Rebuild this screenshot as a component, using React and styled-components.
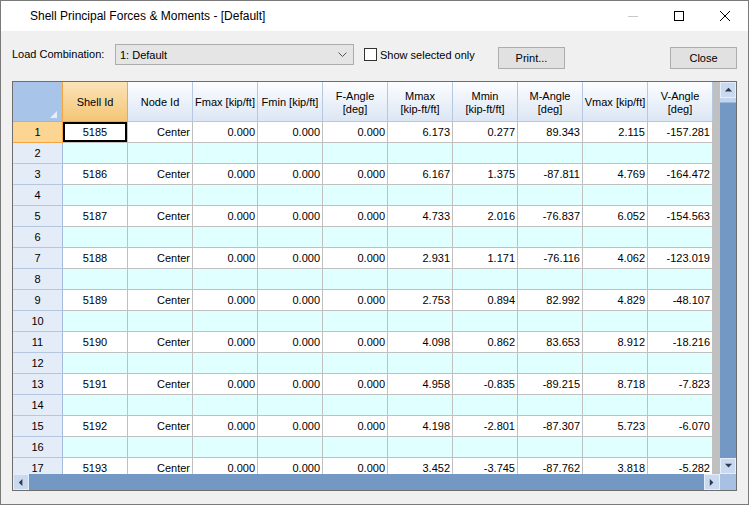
import styled, { createGlobalStyle } from "styled-components";

const GlobalStyle = createGlobalStyle`
  html, body {
    margin: 0;
    padding: 0;
    background: #ffffff;
  }
  * {
    box-sizing: border-box;
  }
`;

const UI_FONT = `"Liberation Sans", Arial, sans-serif`;

const COLUMNS = [
  ["Shell Id"],
  ["Node Id"],
  ["Fmax [kip/ft]"],
  ["Fmin [kip/ft]"],
  ["F-Angle", "[deg]"],
  ["Mmax", "[kip-ft/ft]"],
  ["Mmin", "[kip-ft/ft]"],
  ["M-Angle", "[deg]"],
  ["Vmax [kip/ft]"],
  ["V-Angle", "[deg]"],
];

const RESULTS = [
  ["5185", "6.173", "0.277", "89.343", "2.115", "-157.281"],
  ["5186", "6.167", "1.375", "-87.811", "4.769", "-164.472"],
  ["5187", "4.733", "2.016", "-76.837", "6.052", "-154.563"],
  ["5188", "2.931", "1.171", "-76.116", "4.062", "-123.019"],
  ["5189", "2.753", "0.894", "82.992", "4.829", "-48.107"],
  ["5190", "4.098", "0.862", "83.653", "8.912", "-18.216"],
  ["5191", "4.958", "-0.835", "-89.215", "8.718", "-7.823"],
  ["5192", "4.198", "-2.801", "-87.307", "5.723", "-6.070"],
  ["5193", "3.452", "-3.745", "-87.762", "3.818", "-5.282"],
];

// every result row is followed by an empty row in the grid
const ROWS = RESULTS.flatMap(([id, mmax, mmin, mang, vmax, vang]) => [
  [id, "Center", "0.000", "0.000", "0.000", mmax, mmin, mang, vmax, vang],
  null,
]);

const Window = styled.div`
  width: 749px;
  height: 505px;
  border: 1px solid #7a7a7a;
  background: #f0f0f0;
  display: flex;
  flex-direction: column;
  font-family: ${UI_FONT};
  font-size: 11px;
  color: #000;
  overflow: hidden;
`;

const TitleBar = styled.div`
  height: 30px;
  flex: none;
  background: #ffffff;
  display: flex;
  align-items: center;
  padding-left: 29px;
`;

const Title = styled.div`
  flex: 1;
  font-size: 12px;
  color: #000;
  margin-top: -1px;
`;

const WinButton = styled.div`
  width: 46px;
  height: 30px;
  display: flex;
  align-items: center;
  justify-content: center;
`;

const Content = styled.div`
  flex: 1;
  display: flex;
  flex-direction: column;
  padding: 13px 11px 0 11px;
`;

const Toolbar = styled.div`
  height: 25px;
  display: flex;
  align-items: flex-start;
  margin-bottom: 12px;
`;

const FieldLabel = styled.div`
  width: 103px;
  line-height: 21px;
`;

const Combo = styled.div`
  width: 239px;
  height: 21px;
  border: 1px solid #adadad;
  background: #e5e5e5;
  display: flex;
  align-items: center;
  padding: 0 6px 0 4px;
  justify-content: space-between;
`;

const CheckRow = styled.label`
  width: 134px;
  margin-left: 10px;
  display: flex;
  align-items: center;
  height: 21px;
  gap: 3px;
`;

const CheckBox = styled.span`
  width: 13px;
  height: 13px;
  border: 1px solid #333;
  background: #fff;
  flex: none;
`;

const PushButton = styled.div`
  width: 67px;
  height: 22px;
  margin-top: 3px;
  margin-left: ${({ $push }) => ($push ? "auto" : "0")};
  border: 1px solid #adadad;
  background: #e1e1e1;
  display: flex;
  align-items: center;
  justify-content: center;
`;

const GridFrame = styled.div`
  width: 725px;
  height: 410px;
  border: 1px solid #6d6d6d;
  display: flex;
  flex-direction: column;
  background: #c0c0c0;
`;

const GridMain = styled.div`
  flex: 1;
  display: flex;
  overflow: hidden;
`;

const Sheet = styled.div`
  width: 707px;
  overflow: hidden;
`;

const Line = styled.div`
  display: grid;
  grid-template-columns: 50px repeat(10, 65px);
  height: ${({ $head }) => ($head ? "40px" : "21px")};
`;

const Corner = styled.div`
  position: relative;
  background: #a9c4e9;
  border-right: 1px solid #f6a540;
  border-bottom: 1px solid #f6a540;
`;

const CornerMark = styled.span`
  position: absolute;
  right: 5px;
  bottom: 3px;
  width: 0;
  height: 0;
  border-left: 7px solid transparent;
  border-bottom: 7px solid #e8eef8;
`;

const HeadCell = styled.div`
  display: flex;
  flex-direction: column;
  align-items: center;
  justify-content: center;
  text-align: center;
  white-space: nowrap;
  line-height: 13px;
  padding-top: 2px;
  background: ${({ $active }) =>
    $active
      ? "linear-gradient(#fbe3b8, #f3c676)"
      : "linear-gradient(#fcfdff, #dce6f4)"};
  border-right: 1px solid ${({ $active }) => ($active ? "#f6a540" : "#b4c8e2")};
  border-bottom: 1px solid ${({ $active }) => ($active ? "#f6a540" : "#b4c8e2")};
`;

const RowHead = styled.div`
  display: flex;
  align-items: center;
  justify-content: center;
  background: ${({ $active }) => ($active ? "#fdd593" : "#e4ecf7")};
  border-right: 1px solid ${({ $active }) => ($active ? "#f6a540" : "#a3bcdc")};
  border-bottom: 1px solid ${({ $active }) => ($active ? "#f6a540" : "#b5c7df")};
`;

const Cell = styled.div`
  display: flex;
  align-items: center;
  justify-content: ${({ $center }) => ($center ? "center" : "flex-end")};
  padding-right: ${({ $center }) => ($center ? "0" : "2px")};
  white-space: nowrap;
  background: ${({ $blank }) => ($blank ? "#e0ffff" : "#ffffff")};
  border-right: 1px solid #c0c0c0;
  border-bottom: 1px solid #c0c0c0;
  box-shadow: ${({ $current }) => ($current ? "inset 0 0 0 2px #000" : "none")};
`;

const VScroll = styled.div`
  width: 16px;
  margin-left: auto;
  display: flex;
  flex-direction: column;
  background: #7398c3;
`;

const ArrowButton = styled.div`
  width: 16px;
  height: 16px;
  flex: none;
  background: #c9daf0;
  border: 1px solid #e6eef9;
  display: flex;
  align-items: center;
  justify-content: center;
`;

const Thumb = styled.div`
  height: 5px;
  background: #c2d5ee;
  border-bottom: 1px solid #9fb7d8;
`;

const Track = styled.div`
  flex: 1;
`;

const HScroll = styled.div`
  height: 16px;
  flex: none;
  display: flex;
  background: #7398c3;
`;

const ScrollCorner = styled.div`
  width: 16px;
  background: #a8c0e2;
`;

const Arrow = ({ dir }) => {
  const shapes = {
    up: "1,6 5,2 9,6",
    down: "1,2 5,6 9,2",
    left: "6,1 2,5 6,9",
    right: "2,1 6,5 2,9",
  };
  return (
    <svg width="9" height="9" viewBox="0 0 10 10">
      <polygon points={shapes[dir]} fill="#2c3a52" />
    </svg>
  );
};

function GridView() {
  return (
    <GridFrame>
      <GridMain>
        <Sheet>
          <Line $head>
            <Corner>
              <CornerMark />
            </Corner>
            {COLUMNS.map((lines, i) => (
              <HeadCell key={i} $active={i === 0}>
                {lines.map((t) => (
                  <span key={t}>{t}</span>
                ))}
              </HeadCell>
            ))}
          </Line>
          {ROWS.map((row, r) => (
            <Line key={r}>
              <RowHead $active={r === 0}>{r + 1}</RowHead>
              {COLUMNS.map((_, c) => (
                <Cell
                  key={c}
                  $center={c === 0}
                  $blank={!row}
                  $current={r === 0 && c === 0}
                >
                  {row ? row[c] : ""}
                </Cell>
              ))}
            </Line>
          ))}
        </Sheet>
        <VScroll>
          <ArrowButton>
            <Arrow dir="up" />
          </ArrowButton>
          <Thumb />
          <Track />
          <ArrowButton>
            <Arrow dir="down" />
          </ArrowButton>
        </VScroll>
      </GridMain>
      <HScroll>
        <ArrowButton>
          <Arrow dir="left" />
        </ArrowButton>
        <Track />
        <ArrowButton>
          <Arrow dir="right" />
        </ArrowButton>
        <ScrollCorner />
      </HScroll>
    </GridFrame>
  );
}

export default function App() {
  return (
    <>
      <GlobalStyle />
      <Window>
        <TitleBar>
          <Title>Shell Principal Forces &amp; Moments - [Default]</Title>
          <WinButton>
            <svg width="10" height="10" viewBox="0 0 10 10">
              <line x1="0" y1="5.5" x2="10" y2="5.5" stroke="#c8c8c8" strokeWidth="1" />
            </svg>
          </WinButton>
          <WinButton>
            <svg width="10" height="10" viewBox="0 0 10 10">
              <rect x="0.5" y="0.5" width="9" height="9" fill="none" stroke="#000" strokeWidth="1" />
            </svg>
          </WinButton>
          <WinButton>
            <svg width="10" height="10" viewBox="0 0 10 10">
              <path d="M0 0 L10 10 M10 0 L0 10" stroke="#000" strokeWidth="1" />
            </svg>
          </WinButton>
        </TitleBar>
        <Content>
          <Toolbar>
            <FieldLabel>Load Combination:</FieldLabel>
            <Combo>
              <span>1: Default</span>
              <svg width="9" height="6" viewBox="0 0 9 6">
                <polyline points="0.5,0.5 4.5,4.5 8.5,0.5" fill="none" stroke="#555" strokeWidth="1" />
              </svg>
            </Combo>
            <CheckRow>
              <CheckBox />
              Show selected only
            </CheckRow>
            <PushButton>Print...</PushButton>
            <PushButton $push>Close</PushButton>
          </Toolbar>
          <GridView />
        </Content>
      </Window>
    </>
  );
}
